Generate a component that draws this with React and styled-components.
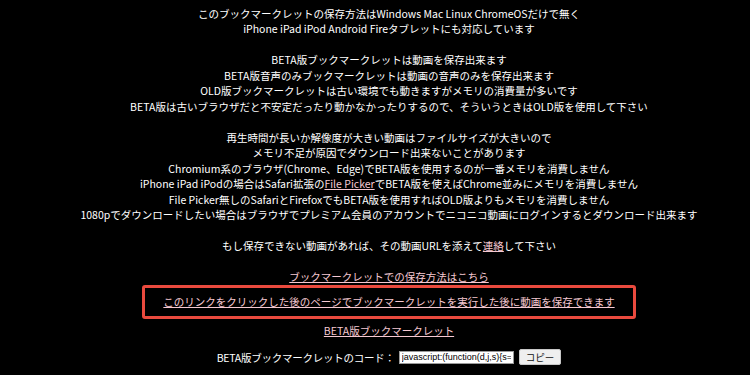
import React from 'react';
import styled, { createGlobalStyle } from 'styled-components';

const GlobalStyle = createGlobalStyle`
	html, body {
		margin: 0;
		padding: 0;
		background: #000;
	}
	body {
		font-family: "Noto Sans CJK JP", "Noto Sans", sans-serif;
	}
`;

const Page = styled.div`
	width: 750px;
	height: 375px;
	overflow: hidden;
	box-sizing: border-box;
	padding: 5.5px 0 0 28px;
	background: #000;
	color: #fff;
	font-size: 10.5px;
	line-height: 15.5px;
	text-align: center;
	display: flex;
	flex-direction: column;
	align-items: center;
`;

const Notes = styled.div`
	display: flex;
	flex-direction: column;
	align-items: center;
`;

const Line = styled.div`
	height: 15.5px;
	white-space: nowrap;
`;

const Blank = styled.div`
	height: 15.5px;
`;

const Link = styled.a`
	color: #f6c9d2;
	text-decoration: underline;
	text-underline-offset: 1px;
	cursor: pointer;
`;

const LinkLine = styled.div`
	margin-top: ${props => props.$top || 0}px;
	white-space: nowrap;
`;

const Highlight = styled.div`
	margin-top: 0.5px;
	padding: 6px 18px;
	border: 3.3px solid #ea4a3e;
	border-radius: 3px;
	white-space: nowrap;
`;

const CodeRow = styled.div`
	margin-top: 11px;
	display: flex;
	align-items: center;
	gap: 4px;
	white-space: nowrap;
`;

const CodeLabel = styled.span`
	letter-spacing: -0.25px;
`;

const CodeInput = styled.input`
	width: 115px;
	height: 13px;
	box-sizing: border-box;
	padding: 0 2px;
	border: 1px solid #9a9a9a;
	font-family: "Liberation Sans", Arial, sans-serif;
	font-size: 9px;
	color: #000;
	background: #fff;
	outline: none;
`;

const CopyButton = styled.button`
	height: 16px;
	padding: 0 6px;
	margin-left: 1px;
	border: 1px solid #c8c8c8;
	border-radius: 2px;
	background: #efefef;
	color: #111;
	font-family: "Noto Sans CJK JP", sans-serif;
	font-size: 9.5px;
	line-height: 14px;
	cursor: pointer;
`;

const code = 'javascript:(function(d,j,s){s=d.createElement(j);s.src="https://example/beta.js";d.body.appendChild(s)})(document,"script")';

export default function App() {
	return (
		<>
			<GlobalStyle />
			<Page>
				<Notes>
					<Line>このブックマークレットの保存方法はWindows Mac Linux ChromeOSだけで無く</Line>
					<Line>iPhone iPad iPod Android Fireタブレットにも対応しています</Line>
					<Blank />
					<Line>BETA版ブックマークレットは動画を保存出来ます</Line>
					<Line>BETA版音声のみブックマークレットは動画の音声のみを保存出来ます</Line>
					<Line>OLD版ブックマークレットは古い環境でも動きますがメモリの消費量が多いです</Line>
					<Line>BETA版は古いブラウザだと不安定だったり動かなかったりするので、そういうときはOLD版を使用して下さい</Line>
					<Blank />
					<Line>再生時間が長いか解像度が大きい動画はファイルサイズが大きいので</Line>
					<Line>メモリ不足が原因でダウンロード出来ないことがあります</Line>
					<Line>Chromium系のブラウザ(Chrome、Edge)でBETA版を使用するのが一番メモリを消費しません</Line>
					<Line>
						iPhone iPad iPodの場合はSafari拡張の<Link>File Picker</Link>でBETA版を使えばChrome並みにメモリを消費しません
					</Line>
					<Line>File Picker無しのSafariとFirefoxでもBETA版を使用すればOLD版よりもメモリを消費しません</Line>
					<Line>1080pでダウンロードしたい場合はブラウザでプレミアム会員のアカウントでニコニコ動画にログインするとダウンロード出来ます</Line>
					<Blank />
					<Line>
						もし保存できない動画があれば、その動画URLを添えて<Link>連絡</Link>して下さい
					</Line>
				</Notes>
				<LinkLine $top={15.5}>
					<Link>ブックマークレットでの保存方法はこちら</Link>
				</LinkLine>
				<Highlight>
					<Link>このリンクをクリックした後のページでブックマークレットを実行した後に動画を保存できます</Link>
				</Highlight>
				<LinkLine $top={4.3}>
					<Link>BETA版ブックマークレット</Link>
				</LinkLine>
				<CodeRow>
					<CodeLabel>BETA版ブックマークレットのコード：</CodeLabel>
					<CodeInput readOnly value={code} />
					<CopyButton>コピー</CopyButton>
				</CodeRow>
			</Page>
		</>
	);
}
